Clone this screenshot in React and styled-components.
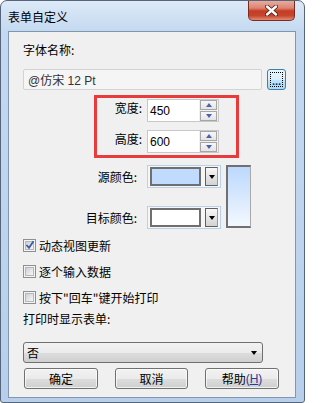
import styled, { createGlobalStyle } from 'styled-components'

const Global = createGlobalStyle`
  html, body {
    margin: 0;
    padding: 0;
    background: #ffffff;
  }
  body {
    font-family: "Liberation Sans", "Noto Sans CJK SC", sans-serif;
    font-size: 12px;
    color: #000;
  }
`

const Window = styled.div`
  width: 305px;
  height: 403px;
  box-sizing: border-box;
  border: 1px solid #55667c;
  border-radius: 7px 7px 3px 3px;
  background: linear-gradient(#dde9f7, #c4d9f0 30px, #bed4ee 55%, #b7cfeb);
  display: flex;
  flex-direction: column;
  padding: 0 8px 4px 7px;
  overflow: hidden;
`

const TitleBar = styled.div`
  height: 30px;
  display: flex;
  align-items: flex-start;
  flex-shrink: 0;
`

const Title = styled.div`
  font-family: "Noto Sans CJK SC", sans-serif;
  font-size: 12px;
  line-height: 14px;
  margin-top: 9px;
`

const CloseButton = styled.div`
  margin-left: auto;
  margin-right: 1px;
  margin-top: -1px;
  width: 47px;
  height: 21px;
  box-sizing: border-box;
  border: 1px solid #7a2b20;
  border-top: none;
  border-radius: 0 0 5px 5px;
  background: linear-gradient(#eab0a3 0%, #dc8472 40%, #c53c24 55%, #c6452b 78%, #e08c72 100%);
  display: flex;
  align-items: center;
  justify-content: center;
`

const Client = styled.div`
  flex: 1;
  border: 1px solid #8196b1;
  background: #f0f0f0;
  padding-left: 14px;
  display: flex;
  flex-direction: column;
  font-family: "Noto Sans CJK SC", sans-serif;
`

const Label = styled.div`
  line-height: 14px;
  margin-top: ${(p) => p.$top}px;
`

const FontRow = styled.div`
  display: flex;
  gap: 5px;
  margin-top: 12px;
`

const FontBox = styled.div`
  width: 239px;
  height: 21px;
  box-sizing: border-box;
  border: 1px solid #d3d3d3;
  border-radius: 2px;
  background: #f5f5f5;
  color: #333;
  padding-left: 4px;
  display: flex;
  align-items: center;
  font-family: "Liberation Sans", "Noto Sans CJK SC", sans-serif;
`

const DotsButton = styled.div`
  width: 19px;
  height: 21px;
  box-sizing: border-box;
  border: 1px solid #3c7fb1;
  border-radius: 3px;
  background: linear-gradient(#eaf6fd, #d9f0fc 50%, #bee6fd 51%, #a7d9f5);
  padding: 2px;
  display: flex;

  span {
    flex: 1;
    border: 1px dotted #000;
    display: flex;
    align-items: flex-end;
    justify-content: center;
    font-family: "Liberation Sans", sans-serif;
    font-size: 11px;
    line-height: 9px;
    color: #1a2a6a;
    font-weight: bold;
  }
`

const RedBox = styled.div`
  margin-top: 5px;
  margin-left: 71px;
  width: 145px;
  height: 63px;
  box-sizing: border-box;
  border: 3px solid #e83b3b;
  padding-top: 1px;
  display: grid;
  grid-template-columns: 45px 72px;
  grid-auto-rows: 23px;
  column-gap: 5px;
  row-gap: 8px;
`

const RowLabel = styled.div`
  text-align: right;
  line-height: 16px;
  padding-top: ${(p) => p.$pad || 0}px;
  align-self: ${(p) => (p.$pad ? 'start' : 'center')};
  white-space: nowrap;
`

const SpinBox = styled.div`
  display: flex;
  box-sizing: border-box;
  border: 1px solid #c8c8c8;
  background: #fff;
`

const SpinValue = styled.div`
  flex: 1;
  display: flex;
  align-items: center;
  padding-left: 2px;
  font-family: "Liberation Sans", sans-serif;
  font-size: 12px;
  color: #000;
`

const SpinButtons = styled.div`
  width: 17px;
  background: #f0f0f0;
  display: flex;
  flex-direction: column;
  gap: 1px;
  padding: 0 1px 0 1px;
  justify-content: center;
`

const SpinButton = styled.div`
  height: 10px;
  box-sizing: border-box;
  border: 1px solid #a6a6a6;
  background: linear-gradient(#f7f7f7, #e4e4e4);
  display: flex;
  align-items: center;
  justify-content: center;

  &::after {
    content: '';
    border-left: 3.5px solid transparent;
    border-right: 3.5px solid transparent;
    ${(p) => (p.$up ? 'border-bottom' : 'border-top')}: 4px solid #4a63ad;
  }
`

const ColorGrid = styled.div`
  margin-top: 7px;
  display: grid;
  grid-template-columns: 114px 74px 20px;
  grid-template-rows: 23px 23px;
  column-gap: 10px;
  row-gap: 18px;

  & > :nth-child(3n) {
    margin-left: -5px;
  }
`

const ColorCombo = styled.div`
  box-sizing: border-box;
  border: 1px solid #b8d0ea;
  background: #f6f6f6;
  padding: 1px 2px 1px 2px;
  display: flex;
  gap: 4px;
`

const Swatch = styled.div`
  width: 52px;
  box-sizing: border-box;
  border: 2px solid #6f6f6f;
  background: ${(p) => p.$color};
`

const DropButton = styled.div`
  width: 13px;
  box-sizing: border-box;
  border: 1px solid #5f5f5f;
  border-right-color: #9a9a9a;
  background: linear-gradient(#f8f8f8, #d2d2d2);
  display: flex;
  align-items: center;
  justify-content: center;

  &::after {
    content: '';
    border-left: 3.5px solid transparent;
    border-right: 3.5px solid transparent;
    border-top: 4px solid #000;
  }
`

const TallSwatch = styled.div`
  grid-row: 1 / span 2;
  grid-column: 3;
  height: 63px;
  box-sizing: border-box;
  border: 2px solid #707070;
  border-right: 1px solid #a8a8a8;
  background: linear-gradient(#bcd8fd, #f3f8ff);
`

const CheckRow = styled.div`
  display: flex;
  align-items: center;
  gap: 3px;
  height: 13px;
  margin-top: ${(p) => p.$top}px;
  line-height: 14px;
`

const CheckBox = styled.div`
  width: 13px;
  height: 13px;
  box-sizing: border-box;
  border: 1px solid #8e8f8f;
  background: #f4f4f4;
  padding: 1px;
  display: flex;

  span {
    flex: 1;
    border: 1px solid #b4b8bd;
    background: linear-gradient(135deg, #cdd1d6, #f6f6f6);
    position: relative;
  }

  svg {
    position: absolute;
    left: -1px;
    top: -2px;
  }
`

const Select = styled.div`
  margin-top: 16px;
  width: 240px;
  height: 21px;
  box-sizing: border-box;
  border: 1px solid #707070;
  border-radius: 3px;
  background: linear-gradient(#f2f2f2, #ebebeb 50%, #dddddd 51%, #cfcfcf);
  display: flex;
  align-items: center;
  padding: 0 5px 0 3px;

  &::after {
    content: '';
    margin-left: auto;
    border-left: 3.5px solid transparent;
    border-right: 3.5px solid transparent;
    border-top: 4px solid #000;
  }
`

const ButtonRow = styled.div`
  margin-top: 5px;
  margin-left: 1px;
  display: flex;
  gap: 17px;
`

const Button = styled.div`
  width: ${(p) => p.$w || 74}px;
  height: 21px;
  box-sizing: border-box;
  border: 1px solid #707070;
  border-radius: 3px;
  background: linear-gradient(#f2f2f2, #ebebeb 50%, #dddddd 51%, #cfcfcf);
  box-shadow: inset 0 0 0 1px rgba(255, 255, 255, 0.7);
  display: flex;
  align-items: center;
  justify-content: center;
  line-height: 14px;

  em {
    font-style: normal;
    color: #2b3a9c;
    font-family: "Liberation Sans", sans-serif;
  }
`

function CloseX() {
  return (
    <svg width="13" height="11" viewBox="0 0 13 11">
      <path d="M2 1.5 L11 9.5 M11 1.5 L2 9.5" stroke="#4a1a14" strokeWidth="4" strokeLinecap="round" />
      <path d="M2 1.5 L11 9.5 M11 1.5 L2 9.5" stroke="#ffffff" strokeWidth="2.4" strokeLinecap="round" />
    </svg>
  )
}

function Spin({ value }) {
  return (
    <SpinBox>
      <SpinValue>{value}</SpinValue>
      <SpinButtons>
        <SpinButton $up />
        <SpinButton />
      </SpinButtons>
    </SpinBox>
  )
}

function Check({ checked, label, top }) {
  return (
    <CheckRow $top={top}>
      <CheckBox>
        <span>
          {checked && (
            <svg width="10" height="10" viewBox="0 0 10 10">
              <path d="M1.5 5 L4 7.8 L8.5 1.2" stroke="#3d5aa8" strokeWidth="1.8" fill="none" />
            </svg>
          )}
        </span>
      </CheckBox>
      {label}
    </CheckRow>
  )
}

export default function App() {
  return (
    <>
      <Global />
      <Window>
        <TitleBar>
          <Title>表单自定义</Title>
          <CloseButton>
            <CloseX />
          </CloseButton>
        </TitleBar>
        <Client>
          <Label $top={11}>字体名称:</Label>
          <FontRow>
            <FontBox>@仿宋 12 Pt</FontBox>
            <DotsButton>
              <span>...</span>
            </DotsButton>
          </FontRow>

          <RedBox>
            <RowLabel $pad={1}>宽度:</RowLabel>
            <Spin value="450" />
            <RowLabel $pad={1}>高度:</RowLabel>
            <Spin value="600" />
          </RedBox>

          <ColorGrid>
            <RowLabel>源颜色:</RowLabel>
            <ColorCombo>
              <Swatch $color="#c0dbfe" />
              <DropButton />
            </ColorCombo>
            <TallSwatch />
            <RowLabel>目标颜色:</RowLabel>
            <ColorCombo>
              <Swatch $color="#ffffff" />
              <DropButton />
            </ColorCombo>
          </ColorGrid>

          <Check checked top={10} label="动态视图更新" />
          <Check top={13} label="逐个输入数据" />
          <Check top={13} label={'按下"回车"键开始打印'} />

          <Label $top={8}>打印时显示表单:</Label>
          <Select>否</Select>

          <ButtonRow>
            <Button>确定</Button>
            <Button $w={73}>取消</Button>
            <Button>
              帮助<em>(<u>H</u>)</em>
            </Button>
          </ButtonRow>
        </Client>
      </Window>
    </>
  )
}
